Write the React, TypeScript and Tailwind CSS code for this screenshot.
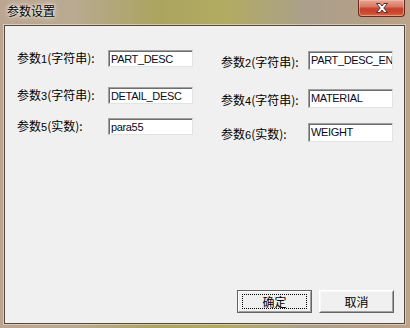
import React from "react";

function Field({ value, className = "" }: { value: string; className?: string }) {
  return (
    <div
      className={`h-[17px] w-[85px] bg-white border border-t-[#a0a0a0] border-l-[#a0a0a0] border-b-[#e3e3e3] border-r-[#e3e3e3] shadow-[inset_1px_1px_0_#6d6d6d] pl-[2px] pt-[1px] text-[11px] leading-[14px] tracking-[-0.35px] text-[#0a0a20] font-['Liberation_Sans',Arial,sans-serif] whitespace-nowrap overflow-hidden ${className}`}
    >
      {value}
    </div>
  );
}

function Label({ pre, num, rest }: { pre: string; num: string; rest: string }) {
  return (
    <span className="text-[12px] leading-[14px] text-black font-['Noto_Sans_CJK_SC',sans-serif]">
      {pre}
      <span className="font-['Liberation_Sans',Arial,sans-serif] text-[11px]">{num}</span>
      {rest}
    </span>
  );
}

function Row({
  label,
  value,
  className = "",
}: {
  label: [string, string, string];
  value: string;
  className?: string;
}) {
  return (
    <div className={`flex items-center ${className}`}>
      <div className="w-[91px] text-[12px] leading-[14px]">
        <Label pre={label[0]} num={label[1]} rest={label[2]} />
      </div>
      <Field value={value} />
    </div>
  );
}

function RRow({
  label,
  value,
  className = "",
}: {
  label: [string, string, string];
  value: string;
  className?: string;
}) {
  return (
    <div className={`flex items-center ${className}`}>
      <div className="w-[87px] h-[19px] pt-[4px] text-[12px] leading-[14px]">
        <Label pre={label[0]} num={label[1]} rest={label[2]} />
      </div>
      <Field value={value} className="h-[19px]" />
    </div>
  );
}

export default function App() {
  return (
    <div className="w-[410px] h-[328px] overflow-hidden flex flex-col bg-[linear-gradient(90deg,#bba590_0%,#b9aa92_18%,#aaa460_38%,#b1ab62_55%,#aba08c_75%,#b59f86_92%,#bca38a_100%)]">
      {/* Title bar */}
      <div className="h-[25px] flex items-start justify-between pl-[7px] pr-[5px] shrink-0">
        <span className="mt-[4px] text-[12px] leading-[14px] text-black font-['Noto_Sans_CJK_SC',sans-serif] [text-shadow:0_0_6px_#fff,0_0_3px_#fff]">
          参数设置
        </span>
        <div className="w-[47px] h-[17px] rounded-b-[4px] border border-t-0 border-[#6b2a20] bg-[linear-gradient(180deg,#e8a898_0%,#d87a62_40%,#c8402a_55%,#c84a30_80%,#d86a48_100%)] flex items-center justify-center shadow-[inset_0_0_0_1px_rgba(255,200,180,0.5)]">
          <svg width="14" height="12" viewBox="0 0 14 12">
            <path
              d="M1.5 1.5 L5 1.5 L7 4 L9 1.5 L12.5 1.5 L8.8 6 L12.5 10.5 L9 10.5 L7 8 L5 10.5 L1.5 10.5 L5.2 6 Z"
              fill="#fff"
              stroke="#5a3030"
              strokeWidth="1"
              strokeLinejoin="round"
            />
          </svg>
        </div>
      </div>

      {/* Client area */}
      <div className="ml-[4px] w-[401px] h-[299px] border border-[#55493e] bg-[#f0f0f0] flex flex-col shrink-0 shadow-[0_0_0_1px_rgba(255,250,240,0.45)]">
        <div className="flex flex-1">
          {/* left column */}
          <div className="flex flex-col pl-[12px] pt-[24px] w-[204px]">
            <Row label={["参数", "1", "(字符串):"]} value="PART_DESC" />
            <Row label={["参数", "3", "(字符串):"]} value="DETAIL_DESC" className="mt-[20px]" />
            <Row label={["参数", "5", "(实数):"]} value="para55" className="mt-[14px]" />
          </div>
          {/* right column */}
          <div className="flex flex-col pl-[12px] pt-[25px]">
            <RRow label={["参数", "2", "(字符串):"]} value="PART_DESC_EN" />
            <RRow label={["参数", "4", "(字符串):"]} value="MATERIAL" className="mt-[19px]" />
            <RRow label={["参数", "6", "(实数):"]} value="WEIGHT" className="mt-[15px]" />
          </div>
        </div>

        {/* buttons */}
        <div className="flex justify-end gap-[7px] pr-[10px] pb-[10px]">
          <div className="w-[75px] h-[23px] border border-[#646464] bg-[#f0f0f0]">
            <div className="h-full w-full border border-t-white border-l-white border-b-[#a0a0a0] border-r-[#a0a0a0] flex items-center justify-center">
              <div className="w-[65px] h-[15px] border border-dotted border-black flex items-center justify-center text-[12px] leading-[13px] text-black font-['Noto_Sans_CJK_SC',sans-serif]">
                确定
              </div>
            </div>
          </div>
          <div className="w-[75px] h-[23px] border border-t-white border-l-white border-b-[#646464] border-r-[#646464] bg-[#f0f0f0]">
            <div className="h-full w-full border border-t-[#f8f8f8] border-l-[#f8f8f8] border-b-[#a0a0a0] border-r-[#a0a0a0] flex items-center justify-center text-[12px] leading-[13px] text-black font-['Noto_Sans_CJK_SC',sans-serif]">
              取消
            </div>
          </div>
        </div>
      </div>
    </div>
  );
}
